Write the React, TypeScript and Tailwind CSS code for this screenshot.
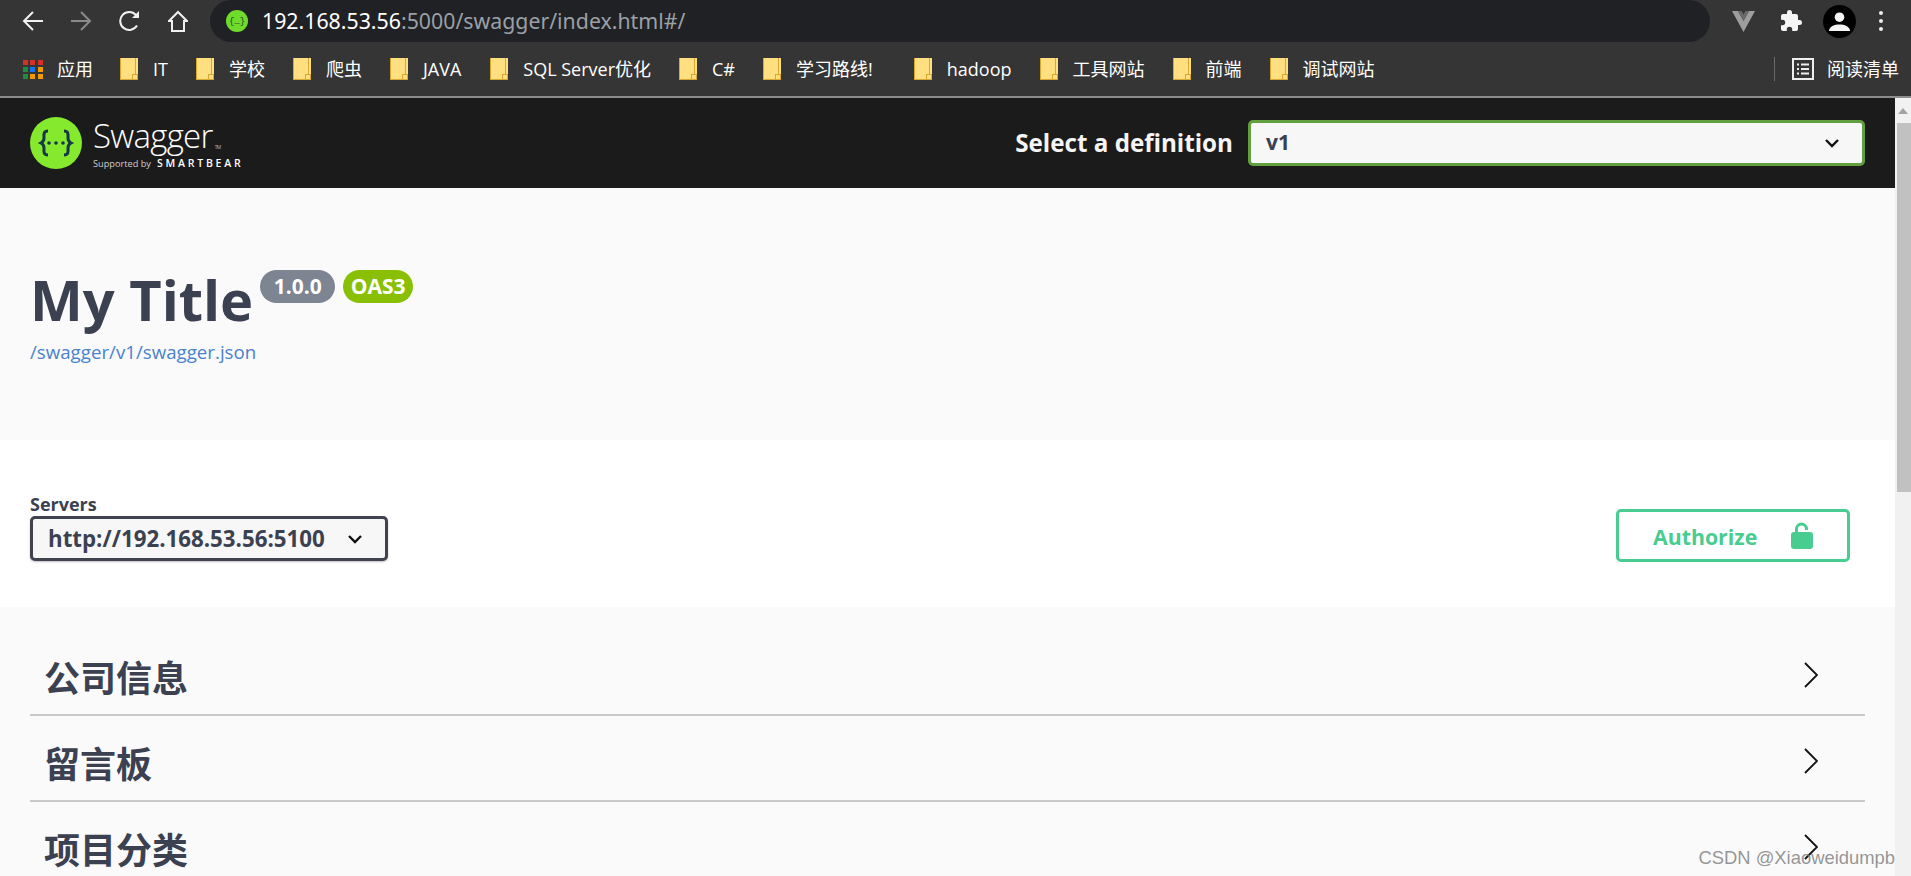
const sans = 'font-["Open_Sans","Noto_Sans_CJK_SC",sans-serif]'

const bookmarks: { label: string; extra?: string }[] = [
  { label: 'IT' },
  { label: '学校' },
  { label: '爬虫' },
  { label: 'JAVA', extra: 'mr-[1px]' },
  { label: 'SQL Server优化' },
  { label: 'C#' },
  { label: '学习路线!', extra: 'mr-[13px]' },
  { label: 'hadoop' },
  { label: '工具网站' },
  { label: '前端' },
  { label: '调试网站' },
]

function Chevron({ size }: { size: number }) {
  return (
    <svg width={size} height={size} viewBox="0 0 22 22" fill="none" stroke="#111111" strokeWidth="2.400">
      <path d="M5 8l6 6 6-6" />
    </svg>
  )
}

function Folder() {
  return (
    <svg width="18" height="22" viewBox="0 0 18 22" className="shrink-0">
      <rect width="18" height="22" fill="#ffdf80" />
      <path d="M0 0h1v21h16v1H0zM15 0h1v16h2v6h-1v-5h-4v4h-1v-5h3z" fill="#d9a92f" />
    </svg>
  )
}

function AppsGrid() {
  const colors = ['#d93025', '#d93025', '#d93025', '#1e8e3e', '#1a73e8', '#f29900', '#1e8e3e', '#f29900', '#f29900']
  return (
    <div className="grid w-[20px] grid-cols-3 gap-[2px]">
      {colors.map((c, i) => (
        <svg key={i} width="5" height="5" viewBox="0 0 5 5">
          <rect width="5" height="5" fill={c} />
        </svg>
      ))}
    </div>
  )
}

function NavIcons() {
  return (
    <div className="flex items-center gap-[27.500px]">
      <svg width="21" height="20" viewBox="0 0 21 20" fill="none" stroke="#f1f1f1" strokeWidth="2">
        <path d="M21 10H2M11 1l-9 9 9 9" />
      </svg>
      <svg width="21" height="20" viewBox="0 0 21 20" fill="none" stroke="#8a8a8a" strokeWidth="2">
        <path d="M0 10h19M10 1l9 9-9 9" />
      </svg>
      <svg width="21" height="22" viewBox="0 0 21 22" fill="none" stroke="#f1f1f1" strokeWidth="2">
        <path d="M18 15.500A9 9 0 1 1 17 5" />
        <path d="M20 1v7h-7z" fill="#f1f1f1" stroke="none" />
      </svg>
      <svg width="20" height="22" viewBox="0 0 20 22" fill="none" stroke="#f1f1f1" strokeWidth="2">
        <path d="M1 11l9-9 9 9h-3v10H4V11z" />
      </svg>
    </div>
  )
}

function BrowserChrome() {
  return (
    <div className={`shrink-0 bg-[#353535] text-white ${sans}`}>
      <div className="flex h-[42px] items-center">
        <div className="w-[210px] pl-[22px]">
          <NavIcons />
        </div>
        <div className="flex h-[42px] w-[1500px] items-center rounded-full bg-[#202124] pl-[16px]">
          <svg width="22" height="22" viewBox="0 0 22 22" className="shrink-0">
            <circle cx="11" cy="11" r="11" fill="#6fdc2c" />
            <text x="11" y="14" fontSize="9" textAnchor="middle" fill="#173b2a" fontFamily="Liberation Mono">{'{…}'}</text>
          </svg>
          <span className="ml-[14px] font-['Noto_Sans',sans-serif] text-[21.300px] leading-none">
            192.168.53.56<span className="text-[#9aa0a6]">:5000/swagger/index.html#/</span>
          </span>
        </div>
        <div className="flex flex-1 items-center pl-[22px]">
          <svg width="23" height="21" viewBox="0 0 23 21">
            <path d="M0 0h6l5.500 10L17 0h6L11.500 21z" fill="#9e9e9e" />
            <path d="M6 0h3.500l2 3.500 2-3.500H17l-5.500 10z" fill="#6a6a6a" />
          </svg>
          <svg width="24" height="24" viewBox="0 0 24 24" fill="#f5f5f5" className="ml-[24px]">
            <path d="M20.500 11H19V7a2 2 0 0 0-2-2h-4V3.500a2.500 2.500 0 0 0-5 0V5H4a2 2 0 0 0-2 2v3.800h1.500a2.700 2.700 0 0 1 0 5.400H2V20a2 2 0 0 0 2 2h3.800v-1.500a2.700 2.700 0 0 1 5.400 0V22H17a2 2 0 0 0 2-2v-4h1.500a2.500 2.500 0 0 0 0-5z" />
          </svg>
          <div className="ml-[20px] flex size-[33px] items-center justify-center rounded-full bg-black">
            <svg width="23" height="23" viewBox="0 0 24 24" fill="#f5f5f5">
              <circle cx="12" cy="7.500" r="5" />
              <path d="M1 22c0-5 6-7 11-7s11 2 11 7z" />
            </svg>
          </div>
          <div className="ml-[23px] flex flex-col gap-[4px]">
            <div className="size-[4px] rounded-full bg-[#eeeeee]" />
            <div className="size-[4px] rounded-full bg-[#eeeeee]" />
            <div className="size-[4px] rounded-full bg-[#eeeeee]" />
          </div>
        </div>
      </div>
      <div className="flex h-[54px] items-center pl-[23px] text-[18px] leading-none">
        <AppsGrid />
        <span className="ml-[14px] mr-[27px]">应用</span>
        <div className="flex items-center gap-[28px]">
          {bookmarks.map((b) => (
            <div key={b.label} className={`flex items-center gap-[15px] ${b.extra ?? ''}`}>
              <Folder />
              <span>{b.label}</span>
            </div>
          ))}
        </div>
        <div className="ml-auto flex items-center">
          <div className="h-[24px] w-px bg-[#6a6a6a]" />
          <svg width="22" height="22" viewBox="0 0 22 22" fill="none" stroke="#eeeeee" strokeWidth="2" className="ml-[17px]">
            <rect x="1" y="1" width="20" height="20" />
            <path d="M5 6.500h2M9 6.500h8M5 11h2M9 11h8M5 15.500h2M9 15.500h8" />
          </svg>
          <span className="ml-[13px] mr-[12px]">阅读清单</span>
        </div>
      </div>
      <div className="h-[2px] bg-[#8d8d8d]" />
    </div>
  )
}

function SwaggerHeader() {
  return (
    <div className="flex h-[90px] items-center bg-[#1b1b1b] pl-[30px] pr-[30px]">
      <svg width="52" height="52" viewBox="0 0 52 52" className="shrink-0">
        <circle cx="26" cy="26" r="26" fill="#85ea2d" />
        <path d="M18 14c-5 0-4 4-4 7 0 3-1 4-3 5 2 1 3 2 3 5 0 3-1 7 4 7M34 14c5 0 4 4 4 7 0 3 1 4 3 5-2 1-3 2-3 5 0 3 1 7-4 7" fill="none" stroke="#173647" strokeWidth="3" />
        <circle cx="19" cy="26" r="1.800" fill="#173647" />
        <circle cx="26" cy="26" r="1.800" fill="#173647" />
        <circle cx="33" cy="26" r="1.800" fill="#173647" />
      </svg>
      <div className="ml-[11px] flex flex-col font-['Open_Sans',sans-serif] text-white">
        <span className="flex items-start text-[33px] font-light leading-[36px] tracking-[-0.7px]">
          Swagger<span className="ml-[2px] mt-[27px] text-[5px] leading-none">TM</span>
        </span>
        <span className="mt-[4px] flex items-baseline leading-none">
          <span className="text-[9.200px] text-[#cfcfcf]">Supported by</span>
          <span className="ml-[6px] text-[10.500px] font-semibold tracking-[2.800px]">SMARTBEAR</span>
        </span>
      </div>
      <span className="ml-auto font-['Open_Sans',sans-serif] text-[24.200px] font-bold text-[#f5f5f5]">Select a definition</span>
      <div className="ml-[15px] flex h-[46px] w-[617px] items-center justify-between rounded-[5px] border-[3px] border-[#62a03f] bg-[#f7f7f7] pl-[15px] pr-[19px]">
        <span className="font-['Open_Sans',sans-serif] text-[21px] font-bold text-[#3b4151]">v1</span>
        <Chevron size={22} />
      </div>
    </div>
  )
}

function InfoBlock() {
  return (
    <div className="h-[252px] bg-[#fafafa] pl-[30px] pt-[72px] font-['Open_Sans',sans-serif]">
      <div className="flex items-start">
        <span className="text-[56px] font-bold leading-[78px] text-[#3b4151]">My Title</span>
        <span className="ml-[7px] mt-[10px] flex h-[33px] w-[75px] items-center justify-center rounded-full bg-[#7d8492] text-[21px] font-bold text-white">1.0.0</span>
        <span className="ml-[8px] mt-[10px] flex h-[33px] w-[70px] items-center justify-center rounded-full bg-[#89bf04] text-[21px] font-bold text-white">OAS3</span>
      </div>
      <div className="mt-[2px] text-[18.700px] leading-[24px] text-[#4a82cc]">/swagger/v1/swagger.json</div>
    </div>
  )
}

function ServersBlock() {
  return (
    <div className="flex h-[167px] items-start justify-between bg-white pl-[30px] pr-[45px] pt-[53px] shadow-[0_2px_2px_-1px_rgba(0,0,0,0.25)] font-['Open_Sans',sans-serif]">
      <div>
        <div className="text-[18px] font-bold leading-[23px] text-[#3b4151]">Servers</div>
        <div className="flex h-[45px] w-[358px] items-center justify-between rounded-[5px] border-[3px] border-[#41444e] bg-[#f7f7f7] pl-[15px] pr-[19px] shadow-[0_1px_2px_rgba(0,0,0,0.25)]">
          <span className="text-[22.300px] font-bold text-[#3b4151]">http://192.168.53.56:5100</span>
          <Chevron size={22} />
        </div>
      </div>
      <div className="mt-[16px] flex h-[53px] w-[234px] items-center rounded-[5px] border-[3px] border-[#49cc90] pl-[34px] text-[#49cc90]">
        <span className="mt-[3px] text-[21.300px] font-bold">Authorize</span>
        <svg width="22" height="27" viewBox="0 0 22 27" className="ml-[34px]">
          <path d="M4 11V7a6.500 6.500 0 0 1 13 0v1h-3V7a3.500 3.500 0 0 0-7 0V11z" fill="#49cc90" />
          <rect x="0" y="10" width="22" height="17" rx="3" fill="#49cc90" />
        </svg>
      </div>
    </div>
  )
}

function TagRow({ title }: { title: string }) {
  return (
    <div className="flex h-[86px] shrink-0 items-center justify-between border-b-2 border-[#c9c9c9] pl-[14px] pr-[47px]">
      <span className='mt-[8px] font-["Noto_Sans_CJK_SC",sans-serif] text-[36px] font-bold leading-none text-[#3b4151]'>{title}</span>
      <svg width="14" height="26" viewBox="0 0 14 26" fill="none" stroke="#111111" strokeWidth="1.800" className="mt-[5px]">
        <path d="M1 1l12 12L1 25" />
      </svg>
    </div>
  )
}

function Scrollbar() {
  return (
    <div className="flex w-[16px] shrink-0 flex-col items-end bg-[#f1f1f1]">
      <div className="flex h-[25px] w-full items-center justify-center">
        <svg width="10" height="6" viewBox="0 0 10 6">
          <path d="M5 0l5 6H0z" fill="#a3a3a3" />
        </svg>
      </div>
      <div className="h-[369px] w-[14px] bg-[#c1c1c1]" />
    </div>
  )
}

export default function App() {
  return (
    <div className="relative flex h-[876px] w-[1911px] flex-col overflow-hidden bg-white">
      <BrowserChrome />
      <div className="flex min-h-0 flex-1">
        <div className="flex min-w-0 flex-1 flex-col">
          <SwaggerHeader />
          <InfoBlock />
          <ServersBlock />
          <div className="flex-1 overflow-hidden bg-[#fafafa] pl-[30px] pr-[30px] pt-[23px]">
            <TagRow title="公司信息" />
            <TagRow title="留言板" />
            <TagRow title="项目分类" />
          </div>
        </div>
        <Scrollbar />
      </div>
      <div className="absolute bottom-[9px] right-[16px] font-['Liberation_Sans',sans-serif] text-[18.400px] leading-none text-[#7a7a7a]/80">CSDN @Xiaoweidumpb</div>
    </div>
  )
}
